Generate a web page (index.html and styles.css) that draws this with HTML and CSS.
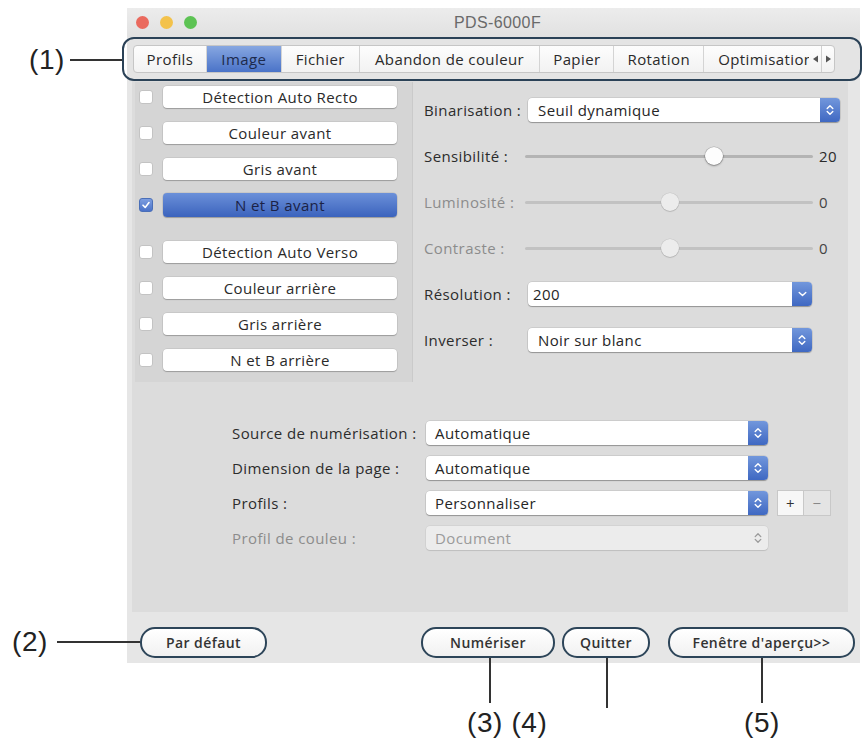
FILE: index.html
```html
<!DOCTYPE html>
<html lang="fr">
<head>
<meta charset="utf-8">
<title>PDS-6000F</title>
<link rel="stylesheet" href="styles.css">
</head>
<body>
<div class="stage">
  <div class="window">
    <div class="titlebar">
      <div class="lights">
        <span class="light red"></span><span class="light yellow"></span><span class="light green"></span>
      </div>
      <div class="title">PDS-6000F</div>
      <div></div>
    </div>

    <div class="tabbar">
      <div class="tabs">
        <div class="tab w-profils">Profils</div>
        <div class="tab w-image active">Image</div>
        <div class="tab w-fichier">Fichier</div>
        <div class="tab w-abandon">Abandon de couleur</div>
        <div class="tab w-papier">Papier</div>
        <div class="tab w-rotation">Rotation</div>
        <div class="tab w-optim">Optimisation</div>
        <div class="tab-arrow left"><svg width="7" height="8" viewBox="0 0 7 8"><path d="M6 0.5 L1 4 L6 7.5 Z" fill="#555"/></svg></div>
        <div class="tab-arrow right"><svg width="7" height="8" viewBox="0 0 7 8"><path d="M1 0.5 L6 4 L1 7.5 Z" fill="#555"/></svg></div>
      </div>
    </div>

    <div class="content">
      <div class="upper">
        <div class="modes">
          <div class="mode"><span class="check"></span><span class="mode-btn">Détection Auto Recto</span></div>
          <div class="mode"><span class="check"></span><span class="mode-btn">Couleur avant</span></div>
          <div class="mode"><span class="check"></span><span class="mode-btn">Gris avant</span></div>
          <div class="mode"><span class="check on"><svg width="10" height="10" viewBox="0 0 10 10"><path d="M2 5.2 L4.2 7.4 L8 2.6" fill="none" stroke="#fff" stroke-width="1.6" stroke-linecap="round" stroke-linejoin="round"/></svg></span><span class="mode-btn selected">N et B avant</span></div>
          <div class="mode verso"><span class="check"></span><span class="mode-btn">Détection Auto Verso</span></div>
          <div class="mode"><span class="check"></span><span class="mode-btn">Couleur arrière</span></div>
          <div class="mode"><span class="check"></span><span class="mode-btn">Gris arrière</span></div>
          <div class="mode"><span class="check"></span><span class="mode-btn">N et B arrière</span></div>
        </div>

        <div class="settings">
          <span class="label">Binarisation :</span>
          <div class="select full">
            <span class="value">Seuil dynamique</span>
            <span class="stepper"><svg width="8" height="12" viewBox="0 0 8 12"><path d="M1.2 4.6 L4 1.8 L6.8 4.6 M1.2 7.4 L4 10.2 L6.8 7.4" fill="none" stroke="#fff" stroke-width="1.4" stroke-linecap="round" stroke-linejoin="round"/></svg></span>
          </div>

          <span class="label">Sensibilité :</span>
          <div class="slider">
            <div class="track"><span class="thumb" style="--pos: 65.5%"></span></div>
            <span class="num">20</span>
          </div>

          <span class="label dim">Luminosité :</span>
          <div class="slider off">
            <div class="track"><span class="thumb" style="--pos: 50.5%"></span></div>
            <span class="num">0</span>
          </div>

          <span class="label dim">Contraste :</span>
          <div class="slider off">
            <div class="track"><span class="thumb" style="--pos: 50.5%"></span></div>
            <span class="num">0</span>
          </div>

          <span class="label">Résolution :</span>
          <div class="select mid combo">
            <span class="value">200</span>
            <span class="stepper"><svg width="9" height="6" viewBox="0 0 9 6"><path d="M1.2 1.4 L4.5 4.6 L7.8 1.4" fill="none" stroke="#fff" stroke-width="1.4" stroke-linecap="round" stroke-linejoin="round"/></svg></span>
          </div>

          <span class="label">Inverser :</span>
          <div class="select mid">
            <span class="value">Noir sur blanc</span>
            <span class="stepper"><svg width="8" height="12" viewBox="0 0 8 12"><path d="M1.2 4.6 L4 1.8 L6.8 4.6 M1.2 7.4 L4 10.2 L6.8 7.4" fill="none" stroke="#fff" stroke-width="1.4" stroke-linecap="round" stroke-linejoin="round"/></svg></span>
          </div>
        </div>
      </div>

      <div class="scan-form">
        <span class="label">Source de numérisation :</span>
        <div class="select">
          <span class="value">Automatique</span>
          <span class="stepper"><svg width="8" height="12" viewBox="0 0 8 12"><path d="M1.2 4.6 L4 1.8 L6.8 4.6 M1.2 7.4 L4 10.2 L6.8 7.4" fill="none" stroke="#fff" stroke-width="1.4" stroke-linecap="round" stroke-linejoin="round"/></svg></span>
        </div>
        <span></span>

        <span class="label">Dimension de la page :</span>
        <div class="select">
          <span class="value">Automatique</span>
          <span class="stepper"><svg width="8" height="12" viewBox="0 0 8 12"><path d="M1.2 4.6 L4 1.8 L6.8 4.6 M1.2 7.4 L4 10.2 L6.8 7.4" fill="none" stroke="#fff" stroke-width="1.4" stroke-linecap="round" stroke-linejoin="round"/></svg></span>
        </div>
        <span></span>

        <span class="label">Profils :</span>
        <div class="select">
          <span class="value">Personnaliser</span>
          <span class="stepper"><svg width="8" height="12" viewBox="0 0 8 12"><path d="M1.2 4.6 L4 1.8 L6.8 4.6 M1.2 7.4 L4 10.2 L6.8 7.4" fill="none" stroke="#fff" stroke-width="1.4" stroke-linecap="round" stroke-linejoin="round"/></svg></span>
        </div>
        <div class="pm">
          <span class="pm-btn">+</span>
          <span class="pm-btn off">−</span>
        </div>

        <span class="label dim">Profil de couleu :</span>
        <div class="select disabled">
          <span class="value">Document</span>
          <span class="stepper"><svg width="8" height="12" viewBox="0 0 8 12"><path d="M1.2 4.6 L4 1.8 L6.8 4.6 M1.2 7.4 L4 10.2 L6.8 7.4" fill="none" stroke="#9a9a9a" stroke-width="1.3" stroke-linecap="round" stroke-linejoin="round"/></svg></span>
        </div>
        <span></span>
      </div>
    </div>

    <div class="footer">
      <button class="btn w-defaut">Par défaut</button>
      <button class="btn w-scan">Numériser</button>
      <button class="btn w-quit">Quitter</button>
      <button class="btn w-preview">Fenêtre d'aperçu&gt;&gt;</button>
    </div>
  </div>

  <!-- callouts -->
  <div class="callout-box tabs-box"></div>
  <span class="callout-num n1">(1)</span>
  <span class="lead h l1"></span>
  <span class="callout-num n2">(2)</span>
  <span class="lead h l2"></span>
  <span class="lead v l3"></span>
  <span class="lead v l4"></span>
  <span class="lead v l5"></span>
  <span class="callout-num n34">(3) (4)</span>
  <span class="callout-num n5">(5)</span>
</div>
</body>
</html>
```

FILE: styles.css
```css
* { box-sizing: border-box; }

html, body {
  margin: 0;
  padding: 0;
  background: #fff;
}

body {
  font-family: "Open Sans", "DejaVu Sans", sans-serif;
  font-size: 15px;
  letter-spacing: 0.4px;
  color: #262626;
}

.stage {
  position: relative;
  width: 868px;
  height: 751px;
  overflow: hidden;
  background: #fff;
}

/* ---------- window chrome ---------- */
.window {
  margin: 8px 0 0 127px;
  width: 733px;
  background: #e6e6e6;
}

.titlebar {
  height: 29px;
  display: grid;
  grid-template-columns: 1fr auto 1fr;
  align-items: center;
  background: linear-gradient(#ececec, #e1e1e1);
}

.lights {
  display: flex;
  gap: 11px;
  padding-left: 9px;
}

.light {
  width: 13px;
  height: 13px;
  border-radius: 50%;
}
.red { background: #ea6a5e; }
.yellow { background: #f3c24b; }
.green { background: #5dc354; }

.title {
  padding-left: 8px;
  font-family: "Liberation Sans", Arial, sans-serif;
  font-size: 16px;
  letter-spacing: 0.4px;
  color: #6a6a6a;
}

/* ---------- tab strip ---------- */
.tabbar {
  height: 43px;
  padding: 8px 0 0 6px;
  background: #e4e4e4;
}

.tabs {
  display: flex;
  width: 702px;
  height: 28px;
  border: 1px solid #c6c6c6;
  border-radius: 4px;
  background: linear-gradient(#fdfdfd, #f2f2f2);
  overflow: hidden;
}

.tab {
  display: flex;
  align-items: center;
  justify-content: center;
  border-right: 1px solid #d4d4d4;
  font-size: 15px;
  color: #2a2a2a;
  white-space: nowrap;
  overflow: hidden;
}

.tab.active {
  background: linear-gradient(#87a7e1, #4a73c8);
  color: #1c2a4c;
}

.w-profils { width: 73px; }
.w-image { width: 75px; }
.w-fichier { width: 78px; }
.w-abandon { width: 181px; }
.w-papier { width: 74px; }
.w-rotation { width: 90px; }
.w-optim {
  width: 105px;
  justify-content: flex-start;
  padding-left: 14px;
  border-right: none;
}

.tab-arrow {
  display: flex;
  align-items: center;
  justify-content: center;
  width: 12px;
}
.tab-arrow.right {
  width: 13px;
  border-left: 1px solid #cfcfcf;
}

/* ---------- main panel ---------- */
.content {
  margin: 0 12px 0 5px;
  height: 532px;
  padding: 2px 0 0 3px;
  background: #dcdcdc;
}

.upper {
  display: flex;
  align-items: flex-start;
}

.modes {
  width: 278px;
  height: 300px;
  padding: 4px 15px 11px 4px;
  background: #d5d5d5;
  border-right: 1px solid #cacaca;
  display: flex;
  flex-direction: column;
  gap: 14px;
}

.mode {
  display: flex;
  align-items: center;
  gap: 10px;
  height: 22px;
}
.mode.verso { margin-top: 11px; }

.check {
  flex: none;
  width: 14px;
  height: 14px;
  background: #fff;
  border: 1px solid #c3c3c3;
  border-radius: 3px;
  display: flex;
  align-items: center;
  justify-content: center;
}
.check.on {
  background: linear-gradient(#7d9ee0, #4a72c8);
  border-color: #4a6fb8;
}

.mode-btn {
  flex: 1;
  height: 22px;
  display: flex;
  align-items: center;
  justify-content: center;
  background: #fff;
  border-radius: 4px;
  box-shadow: 0 1px 1px rgba(0, 0, 0, 0.22), 0 0 0 0.5px rgba(0, 0, 0, 0.12);
  color: #2a2a2a;
}
.mode-btn.selected {
  height: 24px;
  background: linear-gradient(#6b90d9, #3b63bd);
  color: #1b2246;
}

.settings {
  flex: 1;
  margin-left: 11px;
  padding: 16px 8px 0 0;
  display: grid;
  grid-template-columns: 104px 1fr;
  grid-auto-rows: 24px;
  row-gap: 22px;
  align-items: center;
}

.label {
  white-space: nowrap;
  color: #2c2c2c;
}
.label.dim { color: #8c8c8c; }

/* popup buttons */
.select {
  display: flex;
  align-items: center;
  height: 24px;
  background: #fff;
  border-radius: 4px;
  box-shadow: 0 1px 1px rgba(0, 0, 0, 0.28), 0 0 0 0.5px rgba(0, 0, 0, 0.14);
}
.select .value {
  flex: 1;
  padding-left: 10px;
  white-space: nowrap;
}
.select.combo .value { padding-left: 5px; }
.select.mid { width: 284px; }

.stepper {
  flex: none;
  width: 20px;
  height: 100%;
  display: flex;
  align-items: center;
  justify-content: center;
  border-radius: 0 4px 4px 0;
  background: linear-gradient(#7297dc, #3f68c2);
}

.select.disabled {
  background: #ececec;
  box-shadow: 0 1px 1px rgba(0, 0, 0, 0.1), 0 0 0 0.5px rgba(0, 0, 0, 0.08);
}
.select.disabled .value { color: #9a9a9a; }
.select.disabled .stepper { background: none; }

/* sliders */
.slider {
  display: flex;
  align-items: center;
  height: 24px;
}
.track {
  position: relative;
  flex: 1;
  height: 3px;
  margin-left: -3px;
  border-radius: 2px;
  background: #b4b4b4;
}
.thumb {
  position: absolute;
  left: var(--pos);
  top: 50%;
  width: 18px;
  height: 18px;
  margin: -9px 0 0 -9px;
  border-radius: 50%;
  background: #fdfdfd;
  box-shadow: 0 1px 2px rgba(0, 0, 0, 0.35), 0 0 0 0.5px rgba(0, 0, 0, 0.2);
}
.slider.off .track { background: #c2c2c2; }
.slider.off .thumb {
  background: #ececec;
  box-shadow: 0 1px 1px rgba(0, 0, 0, 0.12), 0 0 0 0.5px rgba(0, 0, 0, 0.1);
}
.num {
  width: 27px;
  padding-left: 6px;
  color: #2a2a2a;
}
.slider.off .num { color: #444; }

/* scan options */
.scan-form {
  margin-top: 39px;
  padding-left: 97px;
  display: grid;
  grid-template-columns: 194px 342px auto;
  grid-auto-rows: 24px;
  row-gap: 11px;
  align-items: center;
}
.scan-form .select .value { padding-left: 9px; }

.pm {
  display: flex;
  margin-left: 9px;
}
.pm-btn {
  width: 27px;
  height: 26px;
  display: flex;
  align-items: center;
  justify-content: center;
  background: #f7f7f7;
  border: 1px solid #c8c8c8;
  font-size: 15px;
  color: #333;
}
.pm-btn.off {
  border-left: none;
  background: #e4e4e4;
  color: #888;
}

/* ---------- bottom buttons ---------- */
.footer {
  height: 51px;
  display: flex;
  align-items: flex-start;
  padding: 15px 5px 0 13px;
  background: #e6e6e6;
}

.btn {
  height: 31px;
  padding: 0;
  border: 2px solid #2d4559;
  border-radius: 15px;
  background: linear-gradient(#ffffff, #f1f1f1);
  font-family: "Open Sans", "DejaVu Sans", sans-serif;
  font-size: 14px;
  font-weight: 600;
  letter-spacing: 0.4px;
  color: #333;
  white-space: nowrap;
}
.w-defaut { width: 127px; }
.w-scan { width: 134px; margin-left: auto; }
.w-quit { width: 88px; margin-left: 7px; }
.w-preview { width: 187px; margin-left: 18px; }

/* ---------- callouts ---------- */
.callout-box {
  position: absolute;
  border: 2px solid #2b4257;
  border-radius: 12px;
}
.tabs-box {
  left: 122px;
  top: 37px;
  width: 740px;
  height: 44px;
}

.callout-num {
  position: absolute;
  font-family: "Liberation Sans", Arial, sans-serif;
  font-size: 28px;
  line-height: 32px;
  letter-spacing: 0.6px;
  color: #222;
  white-space: nowrap;
}
.n1 { left: 29px; top: 44px; }
.n2 { left: 12px; top: 626px; }
.n34 { left: 467px; top: 707px; }
.n5 { left: 744px; top: 707px; }

.lead {
  position: absolute;
  background: #333;
}
.lead.h { height: 1.5px; }
.lead.v { width: 1.5px; }
.l1 { left: 70px; top: 59px; width: 52px; }
.l2 { left: 57px; top: 641px; width: 83px; }
.l3 { left: 489px; top: 658px; height: 45px; }
.l4 { left: 606px; top: 658px; height: 50px; }
.l5 { left: 761px; top: 658px; height: 45px; }
```
